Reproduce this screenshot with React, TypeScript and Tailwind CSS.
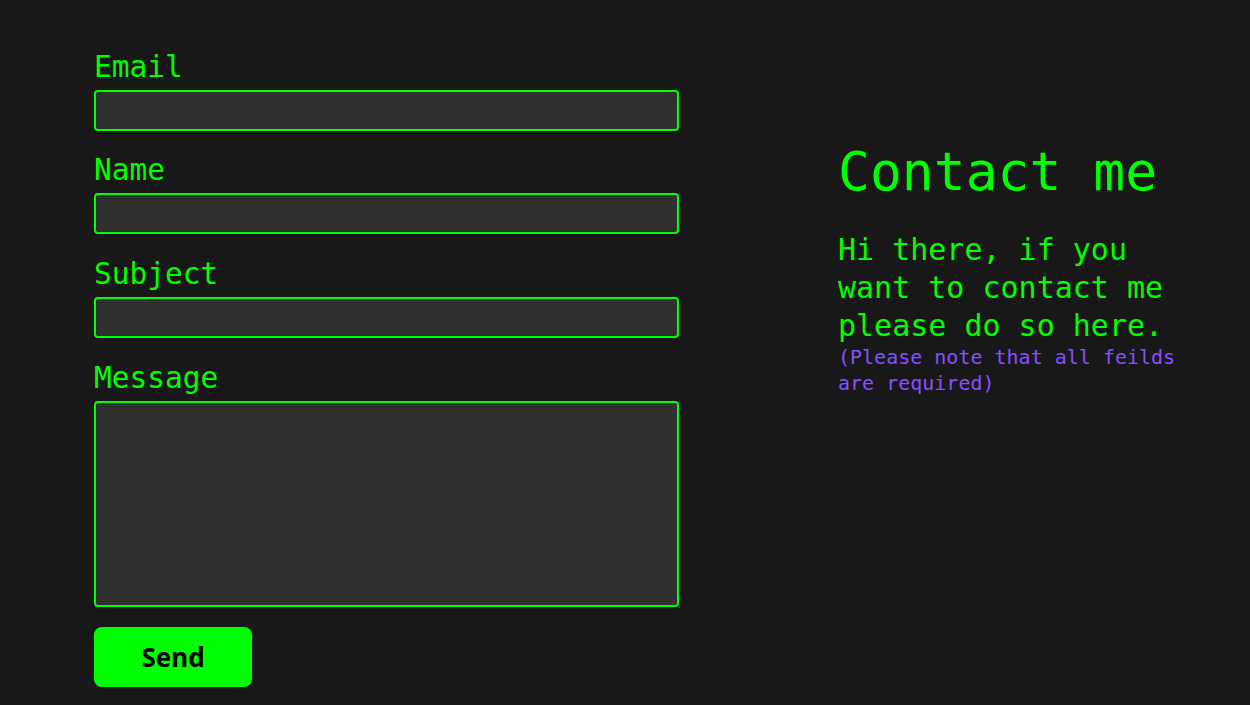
import { useState } from "react"

const mono = "font-['DejaVu_Sans_Mono','Liberation_Mono',monospace]"

function Field({ label, area = false, className = "" }: { label: string; area?: boolean; className?: string }) {
  const [value, setValue] = useState("")
  return (
    <div className={`flex flex-col ${className}`}>
      <label className={`${mono} text-[29.5px] leading-[36px] text-[#00ff00] mb-[5px]`}>{label}</label>
      {area ? (
        <textarea
          value={value}
          onChange={(e) => setValue(e.target.value)}
          className="h-[206px] w-full resize-none rounded-[4px] border-2 border-[#00ff00] bg-[#303030] text-white outline-none"
        />
      ) : (
        <input
          value={value}
          onChange={(e) => setValue(e.target.value)}
          className="h-[41px] w-full rounded-[4px] border-2 border-[#00ff00] bg-[#303030] text-white outline-none"
        />
      )}
    </div>
  )
}

export default function App() {
  return (
    <div className="min-h-screen bg-[#181818] flex">
      <form className="ml-[94px] mt-[49px] flex w-[585px] flex-col" onSubmit={(e) => e.preventDefault()}>
        <Field label="Email" />
        <Field label="Name" className="mt-[21px]" />
        <Field label="Subject" className="mt-[22px]" />
        <Field label="Message" area className="mt-[22px]" />
        <button
          type="submit"
          className="mt-[20px] h-[60px] w-[158px] rounded-lg bg-[#00ff00] font-['Noto_Sans',sans-serif] text-[26px] font-bold text-black"
        >
          Send
        </button>
      </form>

      <div className={`${mono} ml-[159px] mt-[141px] w-[350px]`}>
        <h1 className="text-[53px] leading-[62px] text-[#00ff00]">Contact me</h1>
        <p className="mt-[28px] text-[30px] leading-[38px] text-[#00ff00]">
          Hi there, if you want to contact me please do so here.
        </p>
        <p className="-mt-px text-[20px] leading-[26px] text-[#8a4fff]">(Please note that all feilds are required)</p>
      </div>
    </div>
  )
}
